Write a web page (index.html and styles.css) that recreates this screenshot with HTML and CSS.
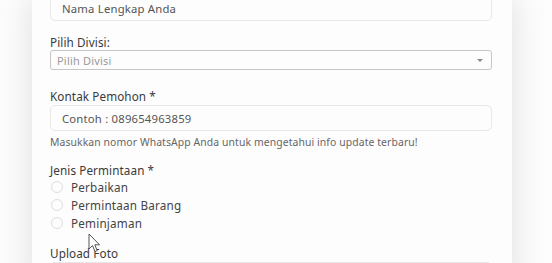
FILE: index.html
```html
<!DOCTYPE html>
<html>
<head>
<meta charset="utf-8">
<link rel="stylesheet" href="styles.css">
</head>
<body>
<div class="card">
  <div class="group g-first">
    <div class="input"><span class="val">Nama Lengkap Anda</span></div>
  </div>
  <div class="group g-select">
    <div class="label">Pilih Divisi:</div>
    <div class="select"><span class="ph">Pilih Divisi</span><span class="arrow"></span></div>
  </div>
  <div class="group">
    <div class="label">Kontak Pemohon *</div>
    <div class="input"><span class="val">Contoh : 089654963859</span></div>
    <div class="help">Masukkan nomor WhatsApp Anda untuk mengetahui info update terbaru!</div>
  </div>
  <div class="group">
    <div class="label">Jenis Permintaan *</div>
    <div class="radio"><span class="dot"></span><span>Perbaikan</span></div>
    <div class="radio"><span class="dot"></span><span>Permintaan Barang</span></div>
    <div class="radio"><span class="dot"></span><span>Peminjaman</span></div>
  </div>
  <div class="group">
    <div class="label">Upload Foto</div>
    <div class="input"></div>
  </div>
</div>
<svg class="cursor" width="14" height="21" viewBox="0 0 14 21"><path d="M1 1 L1 16 L4.5 12.5 L7 18.5 L9.2 17.6 L6.8 11.8 L11.5 11.8 Z" fill="#fff" stroke="#555" stroke-width="1" stroke-linejoin="round"/></svg>
</body>
</html>
```
FILE: styles.css
```css
html, body { margin: 0; padding: 0; background: #fdfdfd; overflow: hidden; }
body { width: 552px; height: 263px; position: relative; font-family: "Noto Sans", sans-serif; color: #333; }
.card {
  margin: -5px 40px 0 32px;
  padding: 0 20px 0 18px;
  background: #fdfdfd;
  box-shadow: 0 0 34px rgba(0,0,0,0.13);
  height: 300px;
}
.group { margin-bottom: 14px; }
.g-first { margin-bottom: 14px; }
.g-select { margin-bottom: 19px; }
.label { font-size: 11.7px; line-height: 15px; color: #3a3a3a; letter-spacing: 0.1px; }
.input {
  height: 26px; box-sizing: border-box;
  border: 1px solid #e8e8e8; border-radius: 5px;
  display: flex; align-items: center; padding-left: 11px;
  font-size: 11.3px; color: #555; background: #fdfdfd; letter-spacing: 0.2px;
}
.select {
  height: 20px; box-sizing: border-box;
  border: 1px solid #c6c6c6; border-radius: 3px;
  display: flex; align-items: center; justify-content: space-between;
  padding: 0 8px 0 6px; font-size: 11px; color: #9a9a9a; letter-spacing: 0.2px;
}
.arrow { width: 0; height: 0; border-left: 3px solid transparent; border-right: 3px solid transparent; border-top: 3px solid #888; }
.label + .input { margin-top: 1px; }
.help { font-size: 10.4px; line-height: 14px; color: #666; margin-top: 4px; letter-spacing: 0.1px; }
.radio { height: 18px; display: flex; align-items: center; font-size: 11.7px; color: #444; letter-spacing: 0.2px; }
.dot { width: 12px; height: 12px; border: 1px solid #ddd; border-radius: 50%; margin: 0 8px 0 1px; box-sizing: border-box; }
.cursor { position: absolute; left: 88px; top: 233px; }
```
